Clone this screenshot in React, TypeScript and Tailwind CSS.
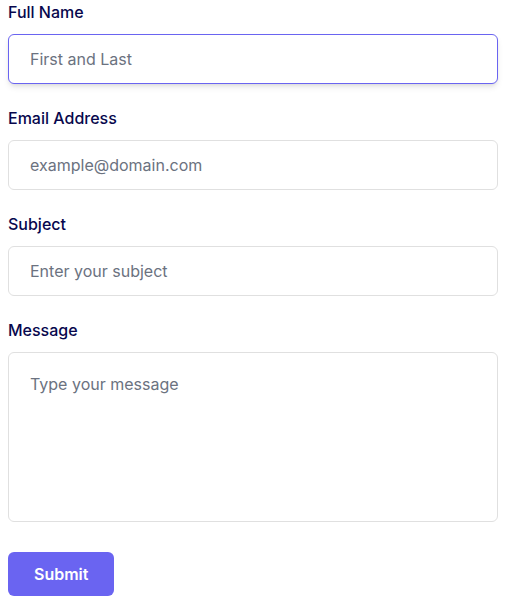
import React from 'react';

const inputBase =
  "w-full h-[50px] rounded-md border bg-white px-[21px] py-3 text-base leading-6 text-[#6B7280] placeholder:text-[#6B7280] outline-none";

export default function App() {
  return (
    <div className="min-h-screen bg-white px-2 font-['Inter',sans-serif]">
      <form onSubmit={(e) => e.preventDefault()}>
        <div className="mb-[22px]">
          <label htmlFor="name" className="block mb-[10px] text-base leading-6 font-medium text-[#07074D]">
            Full Name
          </label>
          <input
            id="name"
            type="text"
            placeholder="First and Last"
            className={`${inputBase} border-[#6A64F1] shadow-md`}
          />
        </div>
        <div className="mb-[22px]">
          <label htmlFor="email" className="block mb-[10px] text-base leading-6 font-medium text-[#07074D]">
            Email Address
          </label>
          <input id="email" type="email" placeholder="example@domain.com" className={`${inputBase} border-[#e0e0e0]`} />
        </div>
        <div className="mb-[22px]">
          <label htmlFor="subject" className="block mb-[10px] text-base leading-6 font-medium text-[#07074D]">
            Subject
          </label>
          <input id="subject" type="text" placeholder="Enter your subject" className={`${inputBase} border-[#e0e0e0]`} />
        </div>
        <div className="mb-[30px]">
          <label htmlFor="message" className="block mb-[10px] text-base leading-6 font-medium text-[#07074D]">
            Message
          </label>
          <textarea
            id="message"
            placeholder="Type your message"
            className="block w-full h-[170px] resize-none rounded-md border border-[#e0e0e0] bg-white px-[21px] pt-[19px] pb-3 text-base leading-6 text-[#6B7280] placeholder:text-[#6B7280] outline-none"
          />
        </div>
        <button
          type="submit"
          className="rounded-md bg-[#6A64F1] px-[26px] py-2.5 text-base leading-6 font-semibold text-white"
        >
          Submit
        </button>
      </form>
    </div>
  );
}
